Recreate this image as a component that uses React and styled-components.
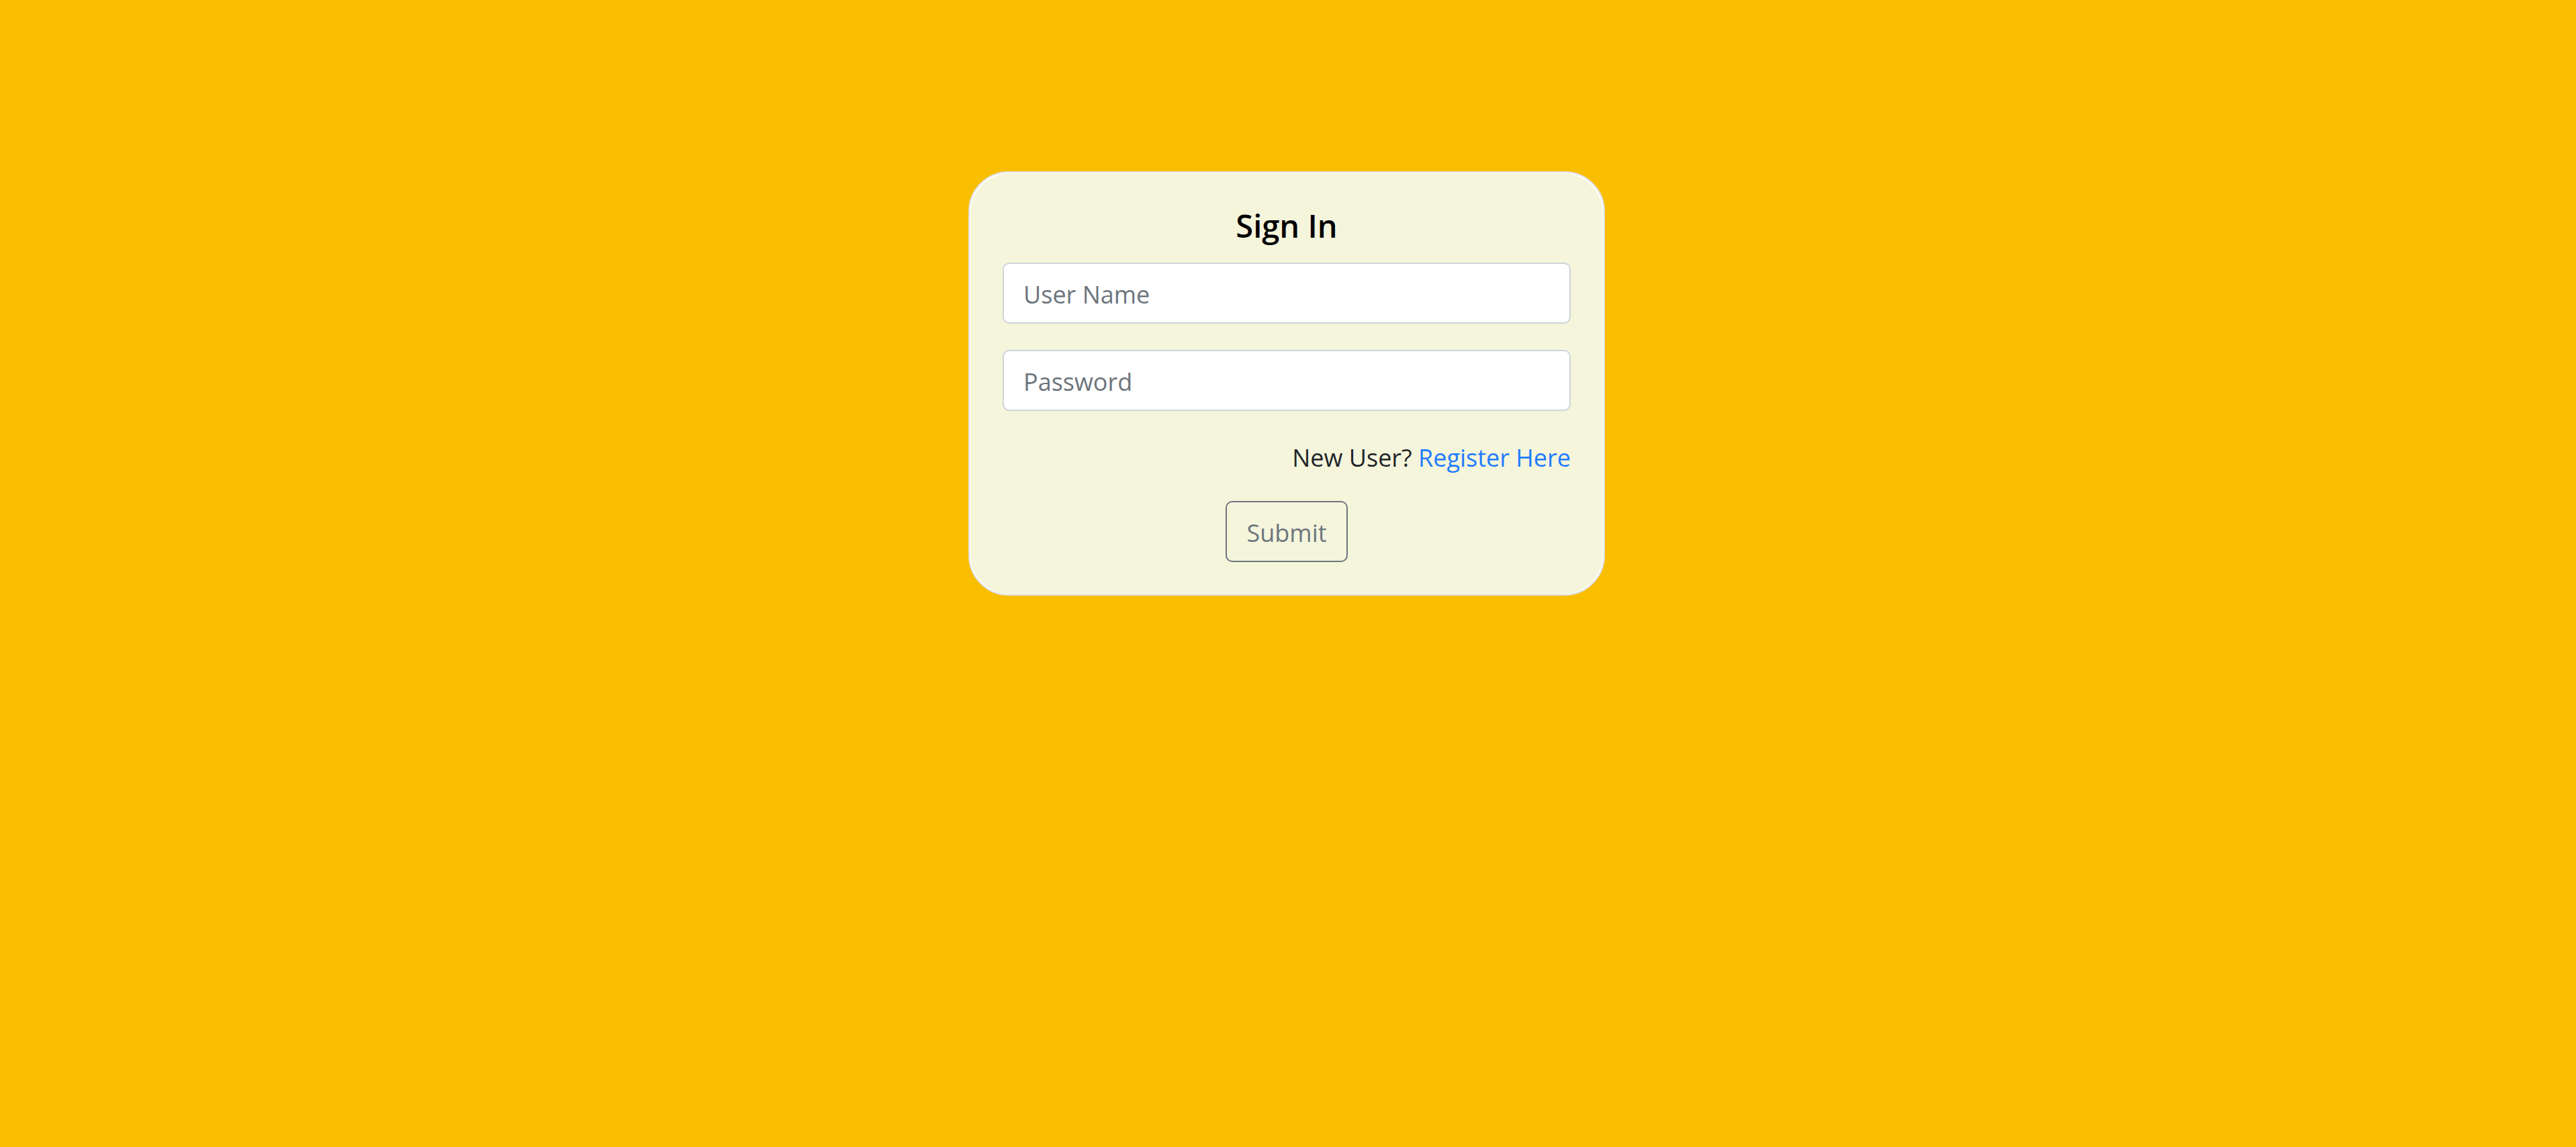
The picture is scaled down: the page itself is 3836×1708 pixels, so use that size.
import React from "react";
import styled, { createGlobalStyle } from "styled-components";

const GlobalStyle = createGlobalStyle`
  *, *::before, *::after { box-sizing: border-box; }
  body {
    margin: 0;
    background: #f9be00;
    color: #212529;
    font-family: "Segoe UI", "Open Sans", "Noto Sans", sans-serif;
    font-size: 36px;
    line-height: 61px;
  }
`;

const Page = styled.main`
  display: flex;
  justify-content: center;
  padding: 255px 4px 48px 0;
`;

const Card = styled.section`
  width: 948px;
  max-width: 100%;
  padding: 1px 1px 0;
  background: #fff;
  border: 2px solid #dfdfdf;
  border-radius: 60px;
`;

const Form = styled.form`
  display: flex;
  flex-direction: column;
  padding: 48px;
  background: #f5f5dc;
  border-radius: 60px;
`;

const Title = styled.h1`
  margin: 0 0 24px;
  color: #000;
  font-size: 47px;
  font-weight: 600;
  line-height: 61px;
  text-align: center;
`;

const Field = styled.input`
  width: 100%;
  height: 91px;
  margin: 0 0 39px;
  padding: 15px 29px 12px;
  background: #fff;
  border: 2px solid #ced4da;
  border-radius: 10px;
  color: #495057;
  font: inherit;

  &::placeholder {
    color: #6c757d;
    opacity: 1;
  }
`;

const RegisterNote = styled.p`
  margin: 0 0 34px;
  text-align: right;
`;

const RegisterLink = styled.a`
  color: #1f7cff;
  text-decoration: none;
`;

const SubmitButton = styled.button`
  align-self: center;
  height: 91px;
  padding: 15px 29px 12px;
  background: transparent;
  border: 2px solid #6c757d;
  border-radius: 10px;
  color: #6c757d;
  font: inherit;
  cursor: pointer;
`;

export default function App() {
  return (
    <>
      <GlobalStyle />
      <Page>
        <Card>
          <Form onSubmit={(event) => event.preventDefault()}>
            <Title>Sign In</Title>
            <Field type="text" name="username" placeholder="User Name" aria-label="User Name" />
            <Field type="password" name="password" placeholder="Password" aria-label="Password" />
            <RegisterNote>
              New User? <RegisterLink href="#register">Register Here</RegisterLink>
            </RegisterNote>
            <SubmitButton type="submit">Submit</SubmitButton>
          </Form>
        </Card>
      </Page>
    </>
  );
}
